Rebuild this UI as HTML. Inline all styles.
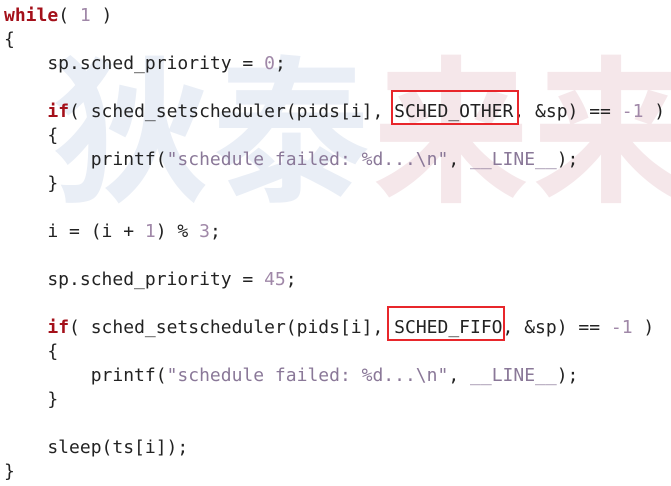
<!DOCTYPE html>
<html><head><meta charset="utf-8"><style>
html,body{margin:0;padding:0;background:#fff;width:671px;height:486px;overflow:hidden;position:relative}
.wm{position:absolute;top:42px;left:52px;font:bold 158px/1 "Noto Sans CJK SC",sans-serif;white-space:nowrap;letter-spacing:2px}
.b{color:#e9eef6}.p{color:#f5e7ea}
pre{position:absolute;left:4px;top:4px;margin:0;font:18px/24px "DejaVu Sans Mono",monospace;color:#222}
.k{color:#a4101a;font-weight:bold}.n{color:#a088a8}.s{color:#8a7898}
.box{position:absolute;border:2px solid #e8262b}
</style></head><body>
<div class="wm"><span class="b">狄泰</span><span class="p">来来</span></div>
<pre><span class="k">while</span>( <span class="n">1</span> )
{
    sp.sched_priority = <span class="n">0</span>;

    <span class="k">if</span>( sched_setscheduler(pids[i], SCHED_OTHER, &amp;sp) == <span class="n">-1</span> )
    {
        printf(<span class="s">"schedule failed: %d...\n"</span>, <span class="s">__LINE__</span>);
    }

    i = (i + <span class="n">1</span>) % <span class="n">3</span>;

    sp.sched_priority = <span class="n">45</span>;

    <span class="k">if</span>( sched_setscheduler(pids[i], SCHED_FIFO, &amp;sp) == <span class="n">-1</span> )
    {
        printf(<span class="s">"schedule failed: %d...\n"</span>, <span class="s">__LINE__</span>);
    }

    sleep(ts[i]);
}</pre>
<div class="box" style="left:391px;top:90px;width:124px;height:31px"></div>
<div class="box" style="left:387px;top:306px;width:114px;height:31px"></div>
</body></html>
